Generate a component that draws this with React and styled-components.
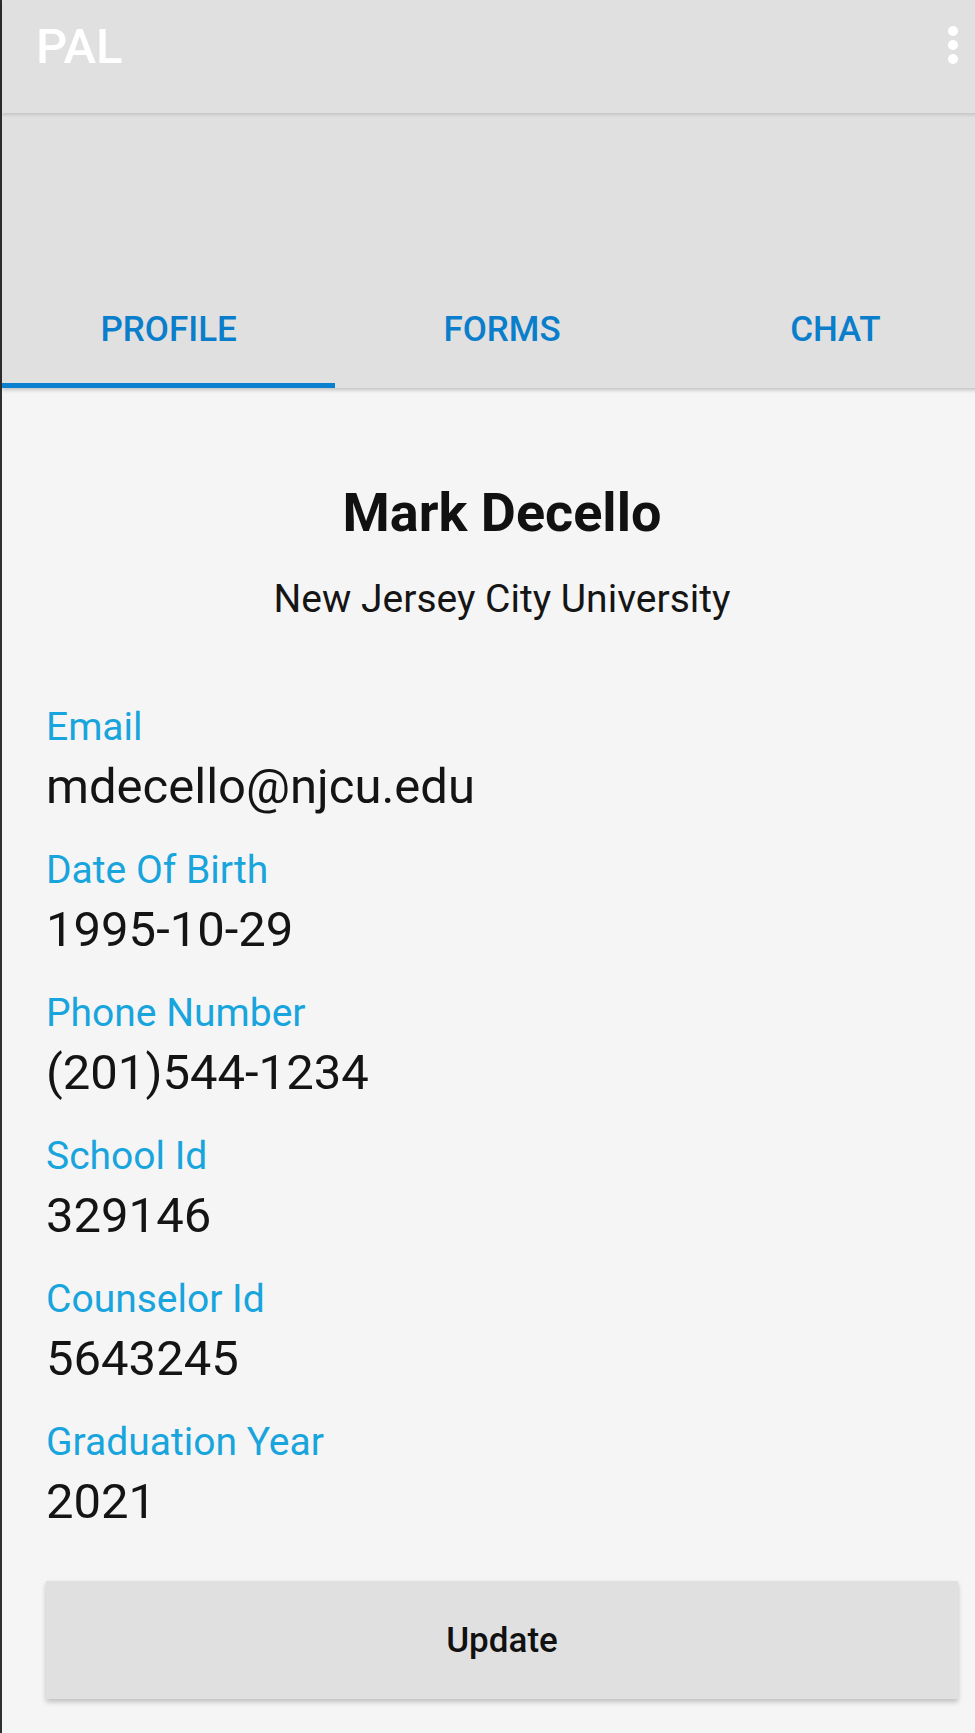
import React from 'react';
import styled, { createGlobalStyle } from 'styled-components';

const Global = createGlobalStyle`
    html, body {
        margin: 0;
        padding: 0;
        background: #f5f5f5;
        overflow: hidden;
    }
    body {
        font-family: Roboto, "Liberation Sans", sans-serif;
    }
`;

const Page = styled.div`
    width: 1000px;
    min-height: 1733px;
    border-left: 2px solid #2f2f2f;
    background: #f5f5f5;
`;

const AppBar = styled.header`
    background: #e0e0e0;
    box-shadow: 0 2px 4px rgba(0, 0, 0, 0.22);
    position: relative;
    z-index: 2;
`;

const Toolbar = styled.div`
    height: 113px;
    box-sizing: border-box;
    display: flex;
    justify-content: space-between;
    align-items: flex-start;
    padding: 17px 44px 0 34px;
    box-shadow: 0 2px 3px rgba(0, 0, 0, 0.12);
    position: relative;
`;

const Title = styled.div`
    color: #ffffff;
    font-size: 49px;
    line-height: 60px;
    font-weight: 500;
`;

const MenuDots = styled.svg`
    margin-top: 9px;
    display: block;
`;

const TabRow = styled.nav`
    height: 275px;
    display: flex;
    align-items: flex-end;
`;

const Tab = styled.div`
    flex: 1;
    text-align: center;
    color: #0a7ecb;
    font-size: 35px;
    line-height: 42px;
    font-weight: 500;
    padding-bottom: 32px;
    border-bottom: 5px solid ${p => (p.$active ? '#0b80cf' : 'transparent')};
`;

const Content = styled.main`
    padding: 93px 44px 0;
`;

const Name = styled.h1`
    margin: 0;
    text-align: center;
    color: #111;
    font-size: 54px;
    line-height: 64px;
    font-weight: 700;
`;

const School = styled.div`
    margin-top: 31px;
    text-align: center;
    color: #151515;
    font-size: 39px;
    line-height: 46px;
`;

const Fields = styled.dl`
    margin: 82px 0 0;
    display: flex;
    flex-direction: column;
    gap: 31px;
`;

const Field = styled.div`
    display: flex;
    flex-direction: column;
    gap: 8px;
`;

const Label = styled.dt`
    color: #18a4dc;
    font-size: 39px;
    line-height: 46px;
`;

const Value = styled.dd`
    margin: 0;
    color: #141414;
    font-size: 49px;
    line-height: 58px;
`;

const UpdateButton = styled.button`
    display: block;
    width: 100%;
    height: 118px;
    margin-top: 50px;
    border: none;
    background: #e0e0e0;
    box-shadow: 0 3px 5px rgba(0, 0, 0, 0.22);
    color: #111;
    font-family: Roboto, "Liberation Sans", sans-serif;
    font-size: 35px;
    font-weight: 500;
`;

const profile = [
    ['Email', 'mdecello@njcu.edu'],
    ['Date Of Birth', '1995-10-29'],
    ['Phone Number', '(201)544-1234'],
    ['School Id', '329146'],
    ['Counselor Id', '5643245'],
    ['Graduation Year', '2021'],
];

export default function App() {
    return (
        <React.Fragment>
            <Global />
            <Page>
                <AppBar>
                    <Toolbar>
                        <Title>PAL</Title>
                        <MenuDots width="10" height="38" viewBox="0 0 10 38">
                            <circle cx="5" cy="5" r="5" fill="#fff" />
                            <circle cx="5" cy="19" r="5" fill="#fff" />
                            <circle cx="5" cy="33" r="5" fill="#fff" />
                        </MenuDots>
                    </Toolbar>
                    <TabRow>
                        <Tab $active>PROFILE</Tab>
                        <Tab>FORMS</Tab>
                        <Tab>CHAT</Tab>
                    </TabRow>
                </AppBar>
                <Content>
                    <Name>Mark Decello</Name>
                    <School>New Jersey City University</School>
                    <Fields>
                        {profile.map(([label, value]) => (
                            <Field key={label}>
                                <Label>{label}</Label>
                                <Value>{value}</Value>
                            </Field>
                        ))}
                    </Fields>
                    <UpdateButton>Update</UpdateButton>
                </Content>
            </Page>
        </React.Fragment>
    );
}
